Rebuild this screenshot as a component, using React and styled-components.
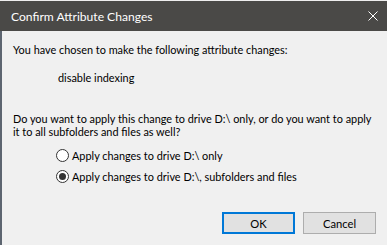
import React, { useState } from 'react';
import styled, { createGlobalStyle } from 'styled-components';

const GlobalStyle = createGlobalStyle`
  html, body {
    margin: 0;
    padding: 0;
    background: #f0f0f0;
  }
`;

// Outer dialog frame
const Window = styled.div`
  width: 387px;
  height: 245px;
  display: flex;
  flex-direction: column;
  overflow: hidden;
  font-family: Lato, "Open Sans", sans-serif;
  font-size: 10.9px;
  color: #000;
`;

const TopEdge = styled.div`
  height: 1px;
  background: #eeeeee;
`;

const TitleBar = styled.div`
  height: 30px;
  display: flex;
  align-items: center;
  justify-content: space-between;
  padding: 0 9px 0 11px;
  background: #4a4947;
  color: #ffffff;
`;

const Title = styled.span`
  font-size: 12.1px;
`;

const CloseIcon = styled.svg`
  width: 10px;
  height: 10px;
`;

const Body = styled.div`
  flex: 1;
  display: flex;
  flex-direction: column;
  border-left: 2px solid #5d6570;
  padding: 12px 8px 11px 11px;
`;

const Text = styled.p`
  margin: 0;
  line-height: 13px;
  margin-top: ${p => p.$top || 0}px;
  padding-left: ${p => p.$indent || 0}px;
`;

const RadioGroup = styled.div`
  display: flex;
  flex-direction: column;
  gap: 8px;
  margin-top: 11px;
  padding-left: 43px;
`;

const RadioRow = styled.label`
  display: flex;
  align-items: center;
  gap: 3px;
  height: 13px;
  cursor: default;
`;

const Circle = styled.span`
  width: 11px;
  height: 11px;
  border: 1px solid #333333;
  border-radius: 50%;
  background: #ffffff;
  display: flex;
  align-items: center;
  justify-content: center;
  &::after {
    content: '';
    width: 7px;
    height: 7px;
    border-radius: 50%;
    background: ${p => (p.$checked ? '#333333' : 'transparent')};
  }
`;

const ButtonRow = styled.div`
  margin-top: auto;
  margin-right: 3px;
  display: flex;
  justify-content: flex-end;
  gap: 8px;
`;

const Button = styled.button`
  width: 73px;
  height: 22px;
  box-sizing: border-box;
  padding: 0;
  background: #e1e1e1;
  border: ${p => (p.$primary ? '2px solid #0078d7' : '1px solid #adadad')};
  font-family: inherit;
  font-size: 11.2px;
  color: #000;
`;

const Radio = ({ checked, onSelect, children }) => (
  <RadioRow onClick={onSelect}>
    <Circle $checked={checked} />
    <span>{children}</span>
  </RadioRow>
);

const App = () => {
  const [choice, setChoice] = useState('all');

  return (
    <Window>
      <GlobalStyle />
      <TopEdge />
      <TitleBar>
        <Title>Confirm Attribute Changes</Title>
        <CloseIcon viewBox="0 0 10 10">
          <path d="M0.5 0.5 L9.5 9.5 M9.5 0.5 L0.5 9.5" stroke="#ffffff" strokeWidth="1" />
        </CloseIcon>
      </TitleBar>
      <Body>
        <Text>You have chosen to make the following attribute changes:</Text>
        <Text $top={15} $indent={45}>disable indexing</Text>
        <Text $top={28}>
          Do you want to apply this change to drive D:\ only, or do you want to apply it to all subfolders and files as well?
        </Text>
        <RadioGroup>
          <Radio checked={choice === 'drive'} onSelect={() => setChoice('drive')}>
            Apply changes to drive D:\ only
          </Radio>
          <Radio checked={choice === 'all'} onSelect={() => setChoice('all')}>
            Apply changes to drive D:\, subfolders and files
          </Radio>
        </RadioGroup>
        <ButtonRow>
          <Button $primary>OK</Button>
          <Button>Cancel</Button>
        </ButtonRow>
      </Body>
    </Window>
  );
};

export default App;
